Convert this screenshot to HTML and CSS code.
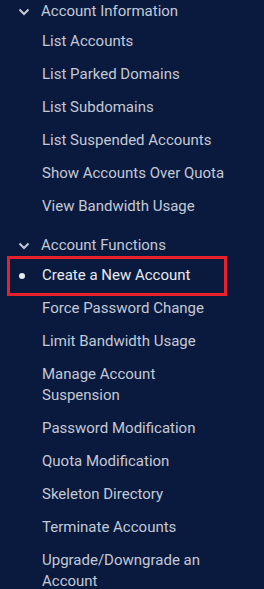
FILE: index.html
```html
<!DOCTYPE html>
<html lang="en">
<head>
    <meta charset="UTF-8">
    <meta name="viewport" content="width=device-width, initial-scale=1.0">
    <title>Account Functions</title>
    <link rel="stylesheet" href="styles.css">
</head>
<body>
    <nav class="sidebar">
        <div class="group">
            <div class="group-title">
                <svg class="chevron" width="12" height="8" viewBox="0 0 12 8"><path d="M1.5 1.5 L6 6 L10.5 1.5" fill="none" stroke="currentColor" stroke-width="2"/></svg>
                Account Information
            </div>
            <ul class="items">
                <li><a href="#">List Accounts</a></li>
                <li><a href="#">List Parked Domains</a></li>
                <li><a href="#">List Subdomains</a></li>
                <li><a href="#">List Suspended Accounts</a></li>
                <li><a href="#">Show Accounts Over Quota</a></li>
                <li><a href="#">View Bandwidth Usage</a></li>
            </ul>
        </div>
        <div class="group">
            <div class="group-title">
                <svg class="chevron" width="12" height="8" viewBox="0 0 12 8"><path d="M1.5 1.5 L6 6 L10.5 1.5" fill="none" stroke="currentColor" stroke-width="2"/></svg>
                Account Functions
            </div>
            <ul class="items">
                <li class="active"><a href="#">Create a New Account</a></li>
                <li><a href="#">Force Password Change</a></li>
                <li><a href="#">Limit Bandwidth Usage</a></li>
                <li><a href="#">Manage Account Suspension</a></li>
                <li><a href="#">Password Modification</a></li>
                <li><a href="#">Quota Modification</a></li>
                <li><a href="#">Skeleton Directory</a></li>
                <li><a href="#">Terminate Accounts</a></li>
                <li><a href="#">Upgrade/Downgrade an Account</a></li>
            </ul>
        </div>
    </nav>
</body>
</html>
```
FILE: styles.css
```css
html {
    font-family: Roboto, "Liberation Sans", sans-serif;
}
body {
    margin: 0;
    background-color: #0a1a3e;
    color: #c3c9d6;
    font-size: 15px;
}
.sidebar {
    margin-top: -2px;
    width: 232px;
}
.group {
    margin-bottom: 9px;
}
.group-title {
    display: flex;
    align-items: center;
    line-height: 21px;
    padding: 3px 0;
}
.chevron {
    width: 12px;
    margin: 0 11px 0 18px;
    color: #c3c9d6;
}
.items {
    list-style: none;
    margin: 0;
    padding: 0;
}
.items li {
    position: relative;
}
.items a {
    display: block;
    padding: 6px 0 6px 42px;
    line-height: 21px;
    color: #c3c9d6;
    text-decoration: none;
}
.items .active a {
    color: #e8ebf1;
}
.items .active a::before {
    content: "";
    position: absolute;
    left: 19px;
    top: 14px;
    width: 6px;
    height: 6px;
    border-radius: 50%;
    background-color: #e8ebf1;
}
.items .active::after {
    content: "";
    position: absolute;
    left: 7px;
    top: -3px;
    width: 214px;
    height: 34px;
    border: 3px solid #e8202a;
}
```
